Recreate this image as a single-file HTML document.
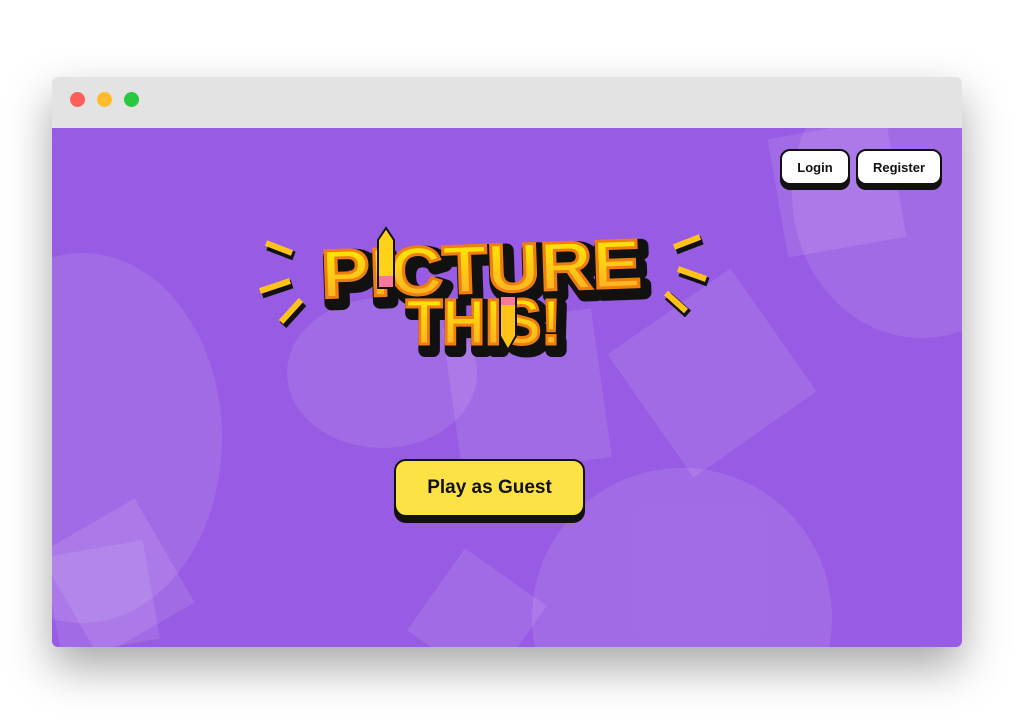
<!DOCTYPE html>
<html><head><meta charset="utf-8"><style>
*{margin:0;padding:0;box-sizing:border-box}
html,body{width:1015px;height:718px;overflow:hidden}
body{background:#fff;position:relative;font-family:"Liberation Sans",sans-serif}
.win{position:absolute;left:52px;top:77px;width:910px;height:570px;border-radius:6px;overflow:hidden;box-shadow:0 20px 45px rgba(0,0,0,.35)}
.bar{height:51px;background:#e3e3e3;position:relative}
.dot{position:absolute;top:15px;width:15px;height:15px;border-radius:50%}
.main{position:absolute;top:51px;left:0;width:910px;height:519px;background:#985be4;overflow:hidden}
.s{position:absolute;background:rgba(255,255,255,.1)}
.btn{position:absolute;background:#fff;border:2px solid #111;border-radius:10px;box-shadow:0 5px 0 #111;font-weight:700;font-size:13px;display:flex;align-items:center;justify-content:center;color:#111}
</style></head><body>
<div class="win">
<div class="bar">
<div class="dot" style="left:18px;background:#fe5f57"></div>
<div class="dot" style="left:45px;background:#febc2e"></div>
<div class="dot" style="left:72px;background:#28c840"></div>
</div>
<div class="main">
<div class="s" style="left:-110px;top:125px;width:280px;height:370px;border-radius:50%"></div>
<div class="s" style="left:235px;top:170px;width:190px;height:150px;border-radius:50%"></div>
<div class="s" style="left:400px;top:190px;width:150px;height:150px;transform:rotate(-8deg)"></div>
<div class="s" style="left:585px;top:170px;width:150px;height:150px;transform:rotate(-35deg)"></div>
<div class="s" style="left:725px;top:0px;width:120px;height:120px;transform:rotate(-10deg)"></div>
<div class="s" style="left:740px;top:-80px;width:260px;height:290px;border-radius:50%"></div>
<div class="s" style="left:480px;top:340px;width:300px;height:300px;border-radius:50%"></div>
<div class="s" style="left:10px;top:390px;width:110px;height:120px;transform:rotate(-30deg)"></div>
<div class="s" style="left:0px;top:420px;width:100px;height:100px;transform:rotate(-10deg)"></div>
<div class="s" style="left:375px;top:440px;width:100px;height:100px;transform:rotate(35deg)"></div>
<div class="btn" style="left:728px;top:21px;width:70px;height:36px">Login</div>
<div class="btn" style="left:804px;top:21px;width:86px;height:36px">Register</div>
<div class="btn" style="left:342px;top:331px;width:191px;height:58px;background:#fde245;font-size:19px;border-radius:12px;box-shadow:0 6px 0 #111">Play as Guest</div>
</div>
</div>
<svg style="position:absolute;left:0;top:0" width="1015" height="718">
<defs><linearGradient id="g" x1="0" y1="0" x2="0" y2="1"><stop offset="0" stop-color="#fff200"/><stop offset="1" stop-color="#ffa52a"/></linearGradient></defs>
<g stroke-linecap="butt">
<g stroke="#111" stroke-width="9">
<line x1="268" y1="246" x2="294" y2="256"/><line x1="262" y1="294" x2="292" y2="284"/><line x1="283" y1="325" x2="303" y2="303"/>
<line x1="676" y1="250" x2="702" y2="240"/><line x1="680" y1="272" x2="708" y2="282"/><line x1="668" y1="296" x2="688" y2="314"/>
</g>
<g stroke="#ffc21a" stroke-width="6">
<line x1="266" y1="243" x2="292" y2="253"/><line x1="260" y1="291" x2="290" y2="281"/><line x1="281" y1="322" x2="301" y2="300"/>
<line x1="674" y1="247" x2="700" y2="237"/><line x1="678" y1="269" x2="706" y2="279"/><line x1="666" y1="293" x2="686" y2="311"/>
</g></g>
<g font-family="Liberation Sans" font-weight="900">
<text x="326" y="298" font-size="68" textLength="320" lengthAdjust="spacingAndGlyphs" fill="#111" stroke="#111" stroke-width="14" stroke-linejoin="round" transform="rotate(-2 485 270)">PICTURE</text>
<text x="321" y="292" font-size="68" textLength="320" lengthAdjust="spacingAndGlyphs" fill="url(#g)" stroke="#f07d10" stroke-width="3" transform="rotate(-2 485 270)">PICTURE</text>
<text x="411" y="350" font-size="64" textLength="155" lengthAdjust="spacingAndGlyphs" fill="#111" stroke="#111" stroke-width="14" stroke-linejoin="round">THIS!</text>
<text x="406" y="344" font-size="64" textLength="155" lengthAdjust="spacingAndGlyphs" fill="url(#g)" stroke="#f07d10" stroke-width="3">THIS!</text>
</g>
<g><polygon points="378,240 386,228 394,240 394,288 378,288" fill="#ffd21a" stroke="#111" stroke-width="2"/><rect x="379" y="276" width="14" height="11" fill="#f6789a"/>
<polygon points="500,296 516,296 516,336 508,350 500,336" fill="#ffc21a" stroke="#111" stroke-width="2"/><rect x="501" y="297" width="14" height="8" fill="#f6789a"/></g>
</svg>
</body></html>
